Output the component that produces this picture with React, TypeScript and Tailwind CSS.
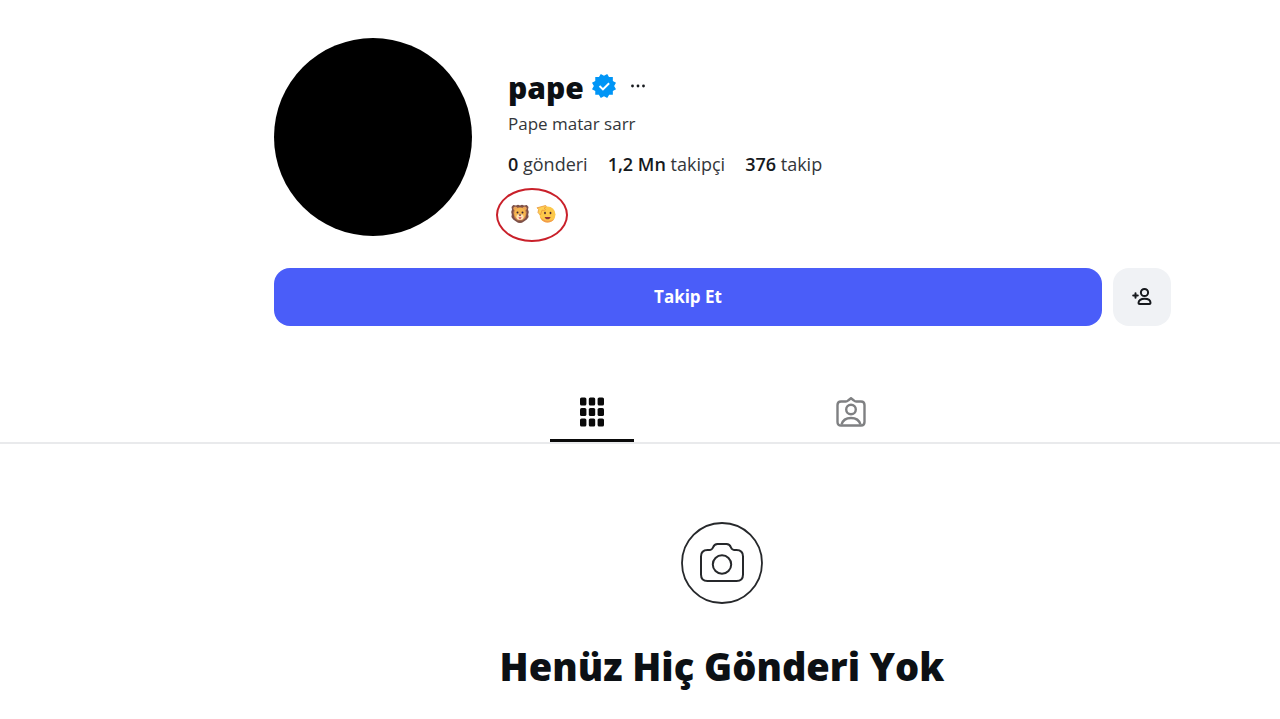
import React from 'react';

const stats = [
  { value: '0', label: 'gönderi' },
  { value: '1,2 Mn', label: 'takipçi' },
  { value: '376', label: 'takip' },
];

const VerifiedBadge: React.FC = () => (
  <svg className="h-6 w-6" viewBox="0 0 40 40" role="img" aria-label="Doğrulanmış">
    <path
      fill="#0095f6"
      fillRule="evenodd"
      d="M19.998 3.094 14.638 0l-2.972 5.15H5.432v6.354L0 14.64 3.094 20 0 25.359l5.432 3.137v5.905h5.975L14.638 40l5.36-3.094L25.358 40l3.232-5.6h6.162v-6.01L40 25.359 36.905 20 40 14.641l-5.248-3.03v-6.46h-6.419L25.358 0l-5.36 3.094Zm7.415 11.225 2.254 2.287-11.43 11.5-6.835-6.93 2.244-2.258 4.587 4.581 9.18-9.18Z"
    />
  </svg>
);

const LionEmoji: React.FC = () => (
  <svg className="h-5 w-5" viewBox="0 0 20 20" role="img" aria-label="Aslan">
    <path
      fill="#7d5048"
      d="M3.2 1 6 1.6 8 .8l2 .7 2-.7 2 .8 2.8-.6 1.7 2-.5 2.5.8 2.500-.6 2.500.4 2.500-1.800 2.500-2.500 1.700-2.300 1.500L10 19l-2-.3-2.300-1.500L3.200 15.500 1.400 13l.4-2.500L1.200 8 2 5.500 1.500 3Z"
    />
    <path fill="#c9824d" d="M4.500 3.500h11l1.200 5-1.200 5.500-3 2.500h-5l-3-2.500-1.200-5.500Z" />
    <circle cx="5.300" cy="4.600" r="2" fill="#e9a35a" />
    <circle cx="14.700" cy="4.600" r="2" fill="#e9a35a" />
    <ellipse cx="10" cy="9.500" rx="5.800" ry="6" fill="#f6b74e" />
    <ellipse cx="10" cy="13" rx="3.600" ry="3" fill="#ffe2b8" />
    <circle cx="7.500" cy="8.500" r="1" fill="#3d2430" />
    <circle cx="12.500" cy="8.500" r="1" fill="#3d2430" />
    <path fill="#4a2632" d="M8.500 10.600h3L10 12.300Z" />
    <path fill="#d8475b" d="M8.300 13.300h3.400L10 15.600Z" />
  </svg>
);

const SaluteEmoji: React.FC = () => (
  <svg className="h-5 w-5" viewBox="0 0 20 20" role="img" aria-label="Selam veren yüz">
    <circle cx="11.500" cy="10.500" r="8" fill="#fcc84a" />
    <path fill="#f29b4b" d="M4 12.500c1.300 4 4.300 6 7.500 6 3 0 5.500-1.500 7-4-1.800 1.500-3.900 2.200-6.500 2.200-3.500 0-6-1.700-8-4.200Z" />
    <path
      fill="#ffcf52"
      stroke="#e8963c"
      strokeWidth="0.800"
      strokeLinejoin="round"
      d="M1 3.800 9.300 1.600c1-.2 1.500 1 .6 1.500L8 4.200l1.300 1c.5.600-.1 1.200-.8 1.100L6 6.200 4.400 11 2 8.600l.6-3.200Z"
    />
    <ellipse cx="9" cy="9" rx="0.900" ry="1.300" fill="#4a2b33" />
    <ellipse cx="14.500" cy="9" rx="0.900" ry="1.300" fill="#4a2b33" />
    <path fill="#8d3038" d="M8.600 13h6c-.5 1.600-1.500 2.300-3 2.300s-2.500-.7-3-2.300Z" />
  </svg>
);

const AddPersonIcon: React.FC = () => (
  <svg className="h-5 w-5" viewBox="0 0 20 20" fill="none" stroke="#16191d" strokeWidth="2" aria-hidden="true">
    <circle cx="12.500" cy="5.500" r="3.600" />
    <path d="M6.500 16c0-2.800 2.500-4.300 6-4.300s6 1.500 6 4.300c0 .7-.4 1.100-1.100 1.100H7.600c-.7 0-1.100-.4-1.100-1.100Z" />
    <path strokeLinecap="round" d="M1.200 8.500h4.600M3.500 6.200v4.600" />
  </svg>
);

const GridIcon: React.FC = () => (
  <svg className="h-[30px] w-[26px]" viewBox="0 0 26 30" fill="#0a0a0a" aria-hidden="true">
    {[0.5, 11, 21.5].map((y) =>
      [1, 9.8, 18.6].map((x) => <rect key={`${x}-${y}`} x={x} y={y} width="6.400" height="8" rx="1.600" />),
    )}
  </svg>
);

const TaggedIcon: React.FC = () => (
  <svg
    className="h-[30px] w-[30px]"
    viewBox="0 0 30 30"
    fill="none"
    stroke="#7f8082"
    strokeWidth="2.400"
    strokeLinejoin="round"
    aria-hidden="true"
  >
    <path d="M5 4.500h4.800c1 0 1.600-.3 2.300-1L15 1.200l2.900 2.300c.7.700 1.300 1 2.300 1H25c2.300 0 3.500 1.200 3.500 3.500v17c0 2.300-1.200 3.500-3.500 3.500H5c-2.300 0-3.500-1.200-3.500-3.500V8c0-2.300 1.200-3.500 3.500-3.500Z" />
    <circle cx="15" cy="12.500" r="4.800" />
    <path d="M5.500 27.500c1.200-4.200 4.700-6.500 9.500-6.500s8.300 2.300 9.500 6.500" />
  </svg>
);

const CameraIcon: React.FC = () => (
  <svg className="h-[82px] w-[82px]" viewBox="0 0 82 82" fill="none" stroke="#26282b" aria-hidden="true">
    <circle cx="41" cy="41" r="40" strokeWidth="1.800" />
    <circle cx="41" cy="42.500" r="9.200" strokeWidth="2" />
    <path
      strokeWidth="2"
      strokeLinejoin="round"
      d="M26.500 28h1.800c2 0 3-.7 3.700-2.500.9-2.400 2-3.500 4.500-3.500h9c2.500 0 3.600 1.100 4.500 3.500.7 1.800 1.700 2.500 3.700 2.500h1.800c4.500 0 6.500 2 6.500 6.500v18c0 4.500-2 6.500-6.500 6.500h-29c-4.500 0-6.500-2-6.500-6.500v-18c0-4.500 2-6.500 6.500-6.500Z"
    />
  </svg>
);

const App: React.FC = () => {
  return (
    <main className="min-h-screen bg-white font-['Open_Sans','Noto_Sans',sans-serif] text-[#0c1014]">
      <div className="pl-[165px]">
        <header className="mx-auto max-w-[897px] pt-[38px]">
          <div className="flex gap-9">
            <div className="h-[198px] w-[198px] shrink-0 rounded-full bg-black" />
            <div className="pt-7">
              <div className="flex h-11 items-center">
                <h1 className="text-[30px] leading-10 font-extrabold">pape</h1>
                <span className="mb-1 ml-2">
                  <VerifiedBadge />
                </span>
                <button type="button" aria-label="Seçenekler" className="mb-1 ml-3 flex h-6 w-5 items-center justify-center">
                  <svg className="h-4 w-4" viewBox="0 0 16 16" fill="#16191d" aria-hidden="true">
                    <circle cx="2.500" cy="8" r="1.400" />
                    <circle cx="8" cy="8" r="1.400" />
                    <circle cx="13.500" cy="8" r="1.400" />
                  </svg>
                </button>
              </div>
              <p className="text-[17px] leading-7 text-[#33363a]">Pape matar sarr</p>
              <ul className="mt-3 flex gap-5 text-[18px] leading-7 text-[#33363a]">
                {stats.map((stat) => (
                  <li key={stat.label}>
                    <span className="font-semibold text-[#16191d]">{stat.value}</span> {stat.label}
                  </li>
                ))}
              </ul>
              <div className="mt-2.5 -ml-3 flex h-[54px] w-[72px] items-center justify-center gap-1.5 rounded-[50%] border-2 border-[#c9202a] pb-0.5 pl-0.5">
                <LionEmoji />
                <SaluteEmoji />
              </div>
            </div>
          </div>

          <div className="mt-[26px] flex gap-[11px]">
            <button type="button" className="h-[58px] flex-1 rounded-2xl bg-[#4a5df9] text-[17px] font-bold text-white">
              Takip Et
            </button>
            <button
              type="button"
              aria-label="Benzer hesaplar"
              className="flex h-[58px] w-[58px] items-center justify-center rounded-2xl bg-[#f0f2f5]"
            >
              <AddPersonIcon />
            </button>
          </div>
        </header>
      </div>

      <nav className="mt-[58px] flex justify-center gap-[175px] border-b-2 border-[#e9eaec] pl-[163px]">
        <a
          href="#posts"
          aria-label="Gönderiler"
          className="flex h-[58px] w-[84px] items-center justify-center border-b-3 border-[#0a0a0a]"
        >
          <GridIcon />
        </a>
        <a href="#tagged" aria-label="Etiketlenenler" className="flex h-[56px] w-[84px] items-center justify-center">
          <TaggedIcon />
        </a>
      </nav>

      <section className="flex flex-col items-center pt-[78px] pl-[164px]">
        <CameraIcon />
        <h2 className="mt-9 text-[38px] leading-[52px] font-extrabold">Henüz Hiç Gönderi Yok</h2>
      </section>
    </main>
  );
};

export default App;
